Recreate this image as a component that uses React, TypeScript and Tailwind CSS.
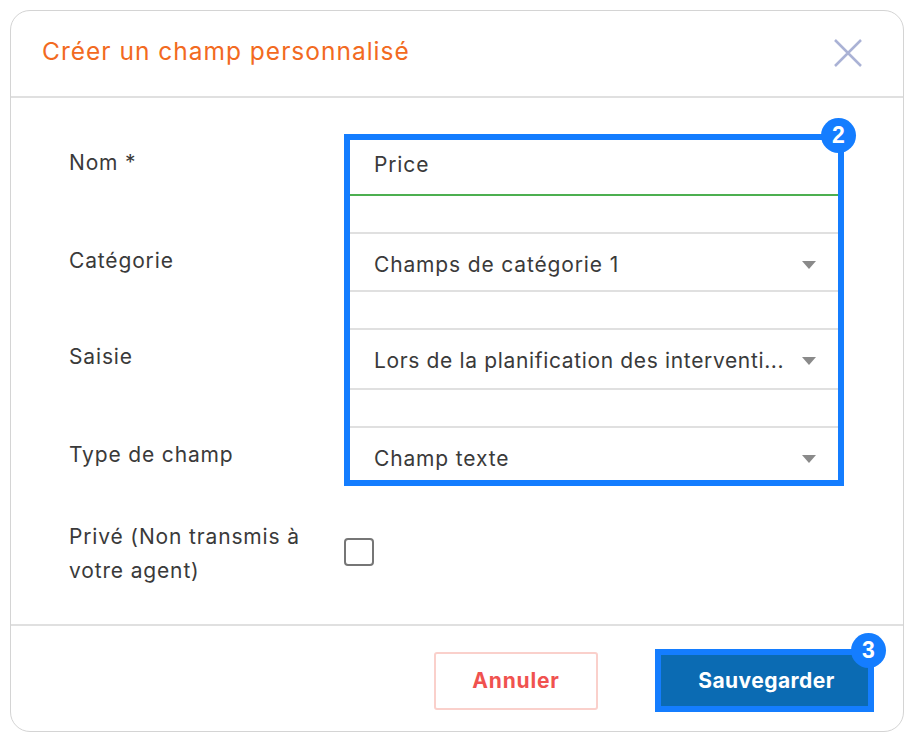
const FONT = "font-['Inter','Noto_Sans',sans-serif]";

function Caret() {
  return (
    <svg width="14" height="8" viewBox="0 0 14 8" className="shrink-0">
      <path d="M0 0H14L7 8Z" fill="#8a8a8a" />
    </svg>
  );
}

function Badge({ n }: { n: string }) {
  return (
    <span className="flex h-[35px] w-[35px] items-center justify-center rounded-full bg-[#147dff] font-['Liberation_Sans',sans-serif] text-[23px] font-bold leading-none tracking-normal text-white">
      {n}
    </span>
  );
}

function SelectRow({ value, h }: { value: string; h: string }) {
  return (
    <div className={`flex items-center justify-between pl-6 pr-[22px] ${h}`}>
      <span className="whitespace-nowrap">{value}</span>
      <Caret />
    </div>
  );
}

export default function App() {
  return (
    <div className={`h-[744px] w-[915px] overflow-hidden bg-white pl-[10px] pt-[10px] text-[21px] tracking-[0.85px] text-[#3a3a3a] ${FONT}`}>
      <div className="flex h-[722px] w-[894px] flex-col rounded-[20px] border border-[#d4d4d4]">
        <header className="flex h-[87px] shrink-0 items-center justify-between border-b-2 border-[#e0e0e0] pl-[31px] pr-[41px] pb-[4px]">
          <h1 className="text-[24.5px] font-normal tracking-[1px] text-[#f26a21]">Créer un champ personnalisé</h1>
          <svg width="28" height="28" viewBox="0 0 28 28" className="mt-[3px]">
            <path d="M1 1L27 27M27 1L1 27" stroke="#aab2d5" strokeWidth="2.5" />
          </svg>
        </header>

        <main className="flex-1 pl-[58px] pt-[36px]">
          <div className="flex">
            <div className="w-[275px] pt-[17px] leading-[24px]">
              <div className="h-[98px]">Nom *</div>
              <div className="h-[96px]">Catégorie</div>
              <div className="h-[98px]">Saisie</div>
              <div>Type de champ</div>
            </div>

            <div className="relative h-[352px] w-[500px] border-[6px] border-[#147dff]">
              <span className="absolute right-[-18px] top-[-22px]">
                <Badge n="2" />
              </span>
              <div className="flex h-[56px] items-center border-b-2 border-[#4caf50] pb-[4px] pl-6">Price</div>
              <div className="mt-[36px] border-y-2 border-[#e0e0e0]">
                <SelectRow value="Champs de catégorie 1" h="h-[56px] pt-[5px]" />
              </div>
              <div className="mt-[36px] border-y-2 border-[#e0e0e0] tracking-[0.65px]">
                <SelectRow value="Lors de la planification des interventi..." h="h-[58px] pt-[4px]" />
              </div>
              <div className="mt-[36px] border-t-2 border-[#e0e0e0]">
                <SelectRow value="Champ texte" h="h-[52px] pt-[10px]" />
              </div>
            </div>
          </div>

          <div className="mt-[34px] flex items-center">
            <div className="w-[275px] leading-[34px]">
              Privé (Non transmis à
              <br />
              votre agent)
            </div>
            <span className="mb-[4px] h-[28px] w-[30px] rounded-[4px] border-2 border-[#767676] bg-white" />
          </div>
        </main>

        <footer className="flex h-[107px] shrink-0 items-start justify-end border-t-2 border-[#e0e0e0] pr-[29px] pt-[23px]">
          <button className="mr-[57px] mt-[3px] h-[58px] w-[164px] rounded-[3px] border-2 border-[#fad0cb] bg-white text-[21px] font-bold tracking-[0.8px] text-[#f0524f]">
            Annuler
          </button>
          <button className="relative h-[63px] w-[219px] border-[6px] border-[#147dff] bg-[#0b6bb3] pl-[4px] text-[21px] font-bold tracking-[0.45px] text-white">
            Sauvegarder
            <span className="absolute right-[-18px] top-[-22px]">
              <Badge n="3" />
            </span>
          </button>
        </footer>
      </div>
    </div>
  );
}
